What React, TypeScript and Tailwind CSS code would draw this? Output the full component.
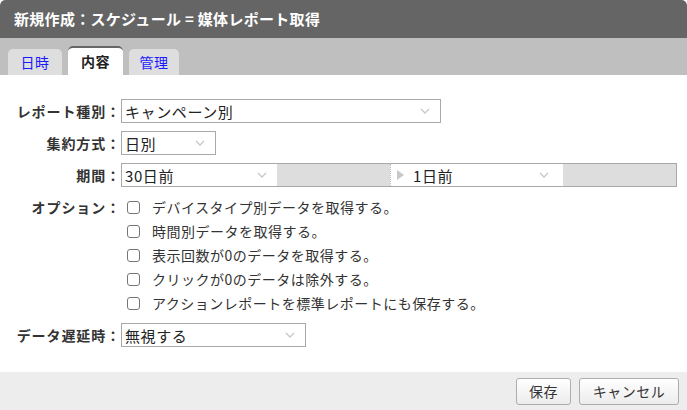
import React from "react";

const font = { fontFamily: '"Noto Sans CJK JP", "Noto Sans", sans-serif' };

function Chevron() {
  return (
    <svg width="10" height="6" viewBox="0 0 10 6" className="shrink-0">
      <path d="M1 1 L5 5 L9 1" fill="none" stroke="#c8c8c8" strokeWidth="1.3" />
    </svg>
  );
}

function Select({ value, className = "" }: { value: string; className?: string }) {
  return (
    <div
      className={`h-[24px] border border-[#a9a9a9] bg-white flex items-center justify-between pl-[3px] pr-[10px] text-[15px] tracking-[0.6px] text-[#222] ${className}`}
    >
      <span className="leading-none">{value}</span>
      <Chevron />
    </div>
  );
}

function Label({ children }: { children: React.ReactNode }) {
  return (
    <div className="w-[121px] shrink-0 text-right font-bold text-[14px] tracking-[0.9px] text-[#333] leading-[24px]">
      {children}
    </div>
  );
}

const options = [
  "デバイスタイプ別データを取得する。",
  "時間別データを取得する。",
  "表示回数が0のデータを取得する。",
  "クリックが0のデータは除外する。",
  "アクションレポートを標準レポートにも保存する。",
];

export default function App() {
  return (
    <div style={font} className="w-[687px] h-[410px] overflow-hidden flex flex-col bg-white rounded-t-[5px]">
      <div className="h-[38px] shrink-0 bg-[#656565] flex items-center pl-[14px] text-white font-bold text-[15px] tracking-[0.3px] rounded-t-[5px] whitespace-pre">
        新規作成：スケジュール = 媒体レポート取得
      </div>
      <div className="h-[37px] shrink-0 bg-[#bfbfbf] flex items-end pl-[8px] gap-[6px]">
        <div className="w-[54px] h-[26px] bg-[#dedede] rounded-t-[5px] flex items-center justify-center text-[14px] tracking-[0.5px] text-[#1a1aff]">
          日時
        </div>
        <div className="w-[55px] h-[29px] bg-white rounded-t-[5px] border-t-[2px] border-[#666] flex items-center justify-center text-[14px] tracking-[0.5px] font-bold text-[#222]">
          内容
        </div>
        <div className="w-[50px] h-[26px] bg-[#dedede] rounded-t-[5px] flex items-center justify-center text-[14px] tracking-[0.5px] text-[#1a1aff]">
          管理
        </div>
      </div>
      <div className="flex-1 flex flex-col pt-[24px] gap-[8px]">
        <div className="flex items-center">
          <Label>レポート種別：</Label>
          <Select value="キャンペーン別" className="w-[320px]" />
        </div>
        <div className="flex items-center">
          <Label>集約方式：</Label>
          <Select value="日別" className="w-[95px]" />
        </div>
        <div className="flex items-center">
          <Label>期間：</Label>
          <div className="w-[556px] h-[24px] border border-[#a9a9a9] bg-[#dddddd] flex items-stretch">
            <div className="w-[155px] bg-white flex items-center justify-between pl-[3px] pr-[10px] text-[15px] tracking-[0.6px] text-[#222]">
              <span className="leading-none">30日前</span>
              <Chevron />
            </div>
            <div className="w-[113px]" />
            <div className="w-[173px] bg-white border-l border-dotted border-[#bbb] flex items-center pl-[6px] pr-[14px] text-[15px] tracking-[0.6px] text-[#222]">
              <svg width="7" height="10" viewBox="0 0 7 10" className="shrink-0">
                <path d="M0 0 L7 5 L0 10 Z" fill="#c8c8c8" />
              </svg>
              <span className="leading-none ml-[9px] flex-1">1日前</span>
              <Chevron />
            </div>
          </div>
        </div>
        <div className="flex items-start">
          <Label>オプション：</Label>
          <div className="flex flex-col pl-[6px]">
            {options.map((o) => (
              <div key={o} className="h-[24px] flex items-center">
                <div className="w-[13px] h-[13px] border border-[#767676] rounded-[3px] bg-white shrink-0" />
                <span className="ml-[12px] text-[14px] tracking-[0.5px] text-[#333] leading-none">{o}</span>
              </div>
            ))}
          </div>
        </div>
        <div className="flex items-center">
          <Label>データ遅延時：</Label>
          <Select value="無視する" className="w-[185px]" />
        </div>
      </div>
      <div className="h-[38px] shrink-0 bg-[#ededed] flex items-center justify-end gap-[8px] pr-[8px]">
        <button className="w-[55px] h-[27px] border border-[#adadad] rounded-[3px] bg-gradient-to-b from-white to-[#ececec] text-[14px] tracking-[0.5px] text-[#333]">
          保存
        </button>
        <button className="w-[100px] h-[27px] border border-[#adadad] rounded-[3px] bg-gradient-to-b from-white to-[#ececec] text-[14px] tracking-[0.5px] text-[#333]">
          キャンセル
        </button>
      </div>
    </div>
  );
}
